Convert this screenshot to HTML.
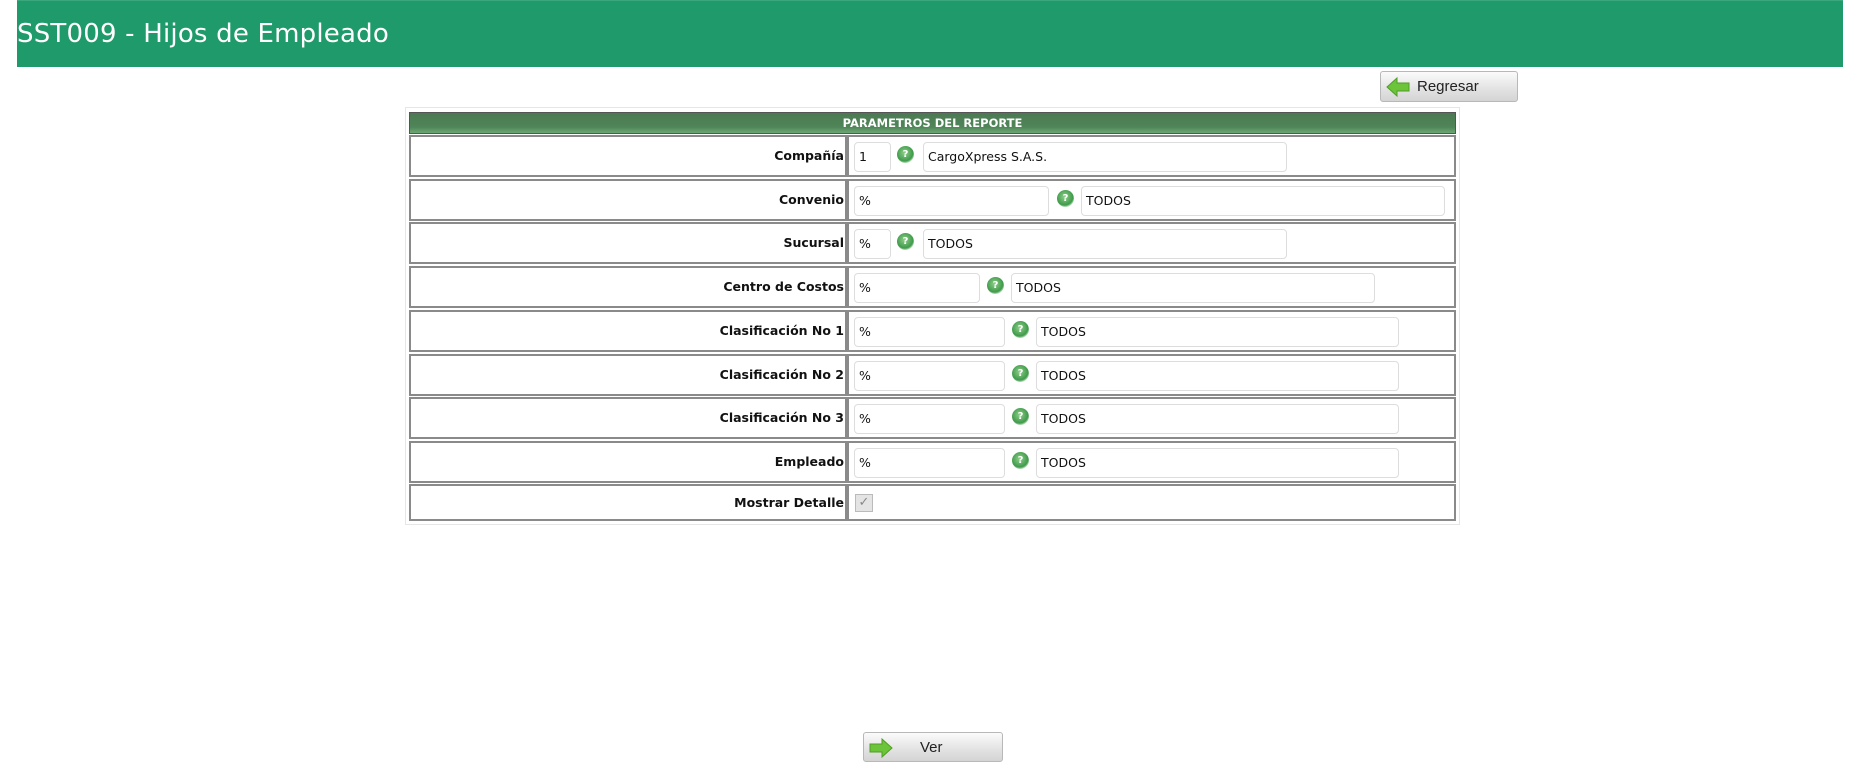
<!DOCTYPE html>
<html><head><meta charset="utf-8"><style>
*{box-sizing:border-box;margin:0;padding:0}
body{width:1874px;height:777px;background:#fff;position:relative;overflow:hidden;font-family:"DejaVu Sans","Liberation Sans",sans-serif}
.hdr{position:absolute;left:17px;top:0;width:1826px;height:67px;background:#1f9a6b;border-top:1px solid #3aa87c}
.hdr span{position:absolute;left:0;top:18px;color:#fff;font-size:26px;letter-spacing:0.2px}
.btn{position:absolute;border:1px solid #b8b8b8;border-radius:3px;background:linear-gradient(#fbfbfb,#e2e2e2 60%,#d4d4d4);font-size:15px;color:#222;font-family:"Liberation Sans",sans-serif}
.btn svg{position:absolute}
.outer{position:absolute;left:405px;top:107px;width:1055px;height:418px;border:1px solid #e6e6e6}
.th{position:absolute;left:409px;top:112px;width:1047px;height:22px;background:linear-gradient(#4c7a52,#4f8558 70%,#6aa874);border:1px solid #555;color:#fff;font-weight:bold;font-size:11.5px;text-align:center;line-height:20px}
.c{position:absolute;border:2px solid #8a8a8a;background:#fff}
.l{left:409px;width:438px;font-weight:bold;font-size:12.5px;text-align:right;color:#111;padding-right:1px}
.v{left:847px;width:609px}
.in{position:absolute;height:30px;border:1px solid #ddd;border-radius:4px;font-size:12.5px;line-height:28px;padding-left:4px;color:#111;background:#fff;font-family:"DejaVu Sans",sans-serif}
.ic{position:absolute;width:17px;height:17px;border-radius:50%;background:radial-gradient(circle at 45% 40%,#8fcf8a,#3f9a4a 60%,#cfe8cf 75%,#fff 100%);color:#fff;font-size:10px;font-weight:bold;text-align:center;line-height:17px}
</style></head><body>
<div class="hdr"><span>SST009 - Hijos de Empleado</span></div>
<div class="btn" style="left:1380px;top:71px;width:138px;height:31px">
<svg style="left:5px;top:5px" width="24" height="20" viewBox="0 0 24 20"><path d="M1 10 L11 1 L11 6 L23 6 L23 14 L11 14 L11 19 Z" fill="#6cc43a" stroke="#4e9e24" stroke-width="1"/></svg>
<span style="position:absolute;left:36px;top:6px">Regresar</span></div>
<div class="outer"></div>
<div class="th">PARAMETROS DEL REPORTE</div>
<div id="rows"></div>
<div class="btn" style="left:863px;top:732px;width:140px;height:30px">
<svg style="left:5px;top:5px" width="24" height="20" viewBox="0 0 24 20"><path d="M23 10 L13 1 L13 6 L1 6 L1 14 L13 14 L13 19 Z" fill="#6cc43a" stroke="#4e9e24" stroke-width="1"/></svg>
<span style="position:absolute;left:56px;top:6px">Ver</span></div>
<script>
var R=[["Compañía","1",891,897,923,1287,"CargoXpress S.A.S."],
["Convenio","%",1049,1057,1081,1445,"TODOS"],
["Sucursal","%",891,897,923,1287,"TODOS"],
["Centro de Costos","%",980,987,1011,1375,"TODOS"],
["Clasificación No 1","%",1005,1012,1036,1399,"TODOS"],
["Clasificación No 2","%",1005,1012,1036,1399,"TODOS"],
["Clasificación No 3","%",1005,1012,1036,1399,"TODOS"],
["Empleado","%",1005,1012,1036,1399,"TODOS"]];
var h="";
R.forEach(function(r,i){var t=Math.round(135+43.7*i);
h+='<div class="c l" style="top:'+t+'px;height:42px;line-height:38px">'+r[0]+'</div>';
h+='<div class="c v" style="top:'+t+'px;height:42px"></div>';
h+='<div class="in" style="left:854px;top:'+(t+7)+'px;width:'+(r[2]-854)+'px">'+r[1]+'</div>';
h+='<div class="ic" style="left:'+r[3]+'px;top:'+(t+11)+'px">?</div>';
h+='<div class="in" style="left:'+r[4]+'px;top:'+(t+7)+'px;width:'+(r[5]-r[4])+'px">'+r[6]+'</div>';});
h+='<div class="c l" style="top:484px;height:37px;line-height:33px">Mostrar Detalle</div>';
h+='<div class="c v" style="top:484px;height:37px"></div>';
h+='<div style="position:absolute;left:855px;top:494px;width:18px;height:18px;border:1px solid #bbb;background:#e4e4e4;color:#888;font-size:13px;line-height:16px;text-align:center">✓</div>';
document.getElementById("rows").innerHTML=h;
</script>
</body></html>
